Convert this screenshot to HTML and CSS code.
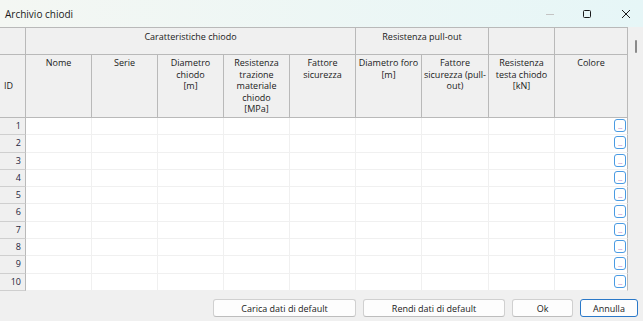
FILE: index.html
```html
<!DOCTYPE html>
<html lang="it">
<head>
<meta charset="utf-8">
<title>Archivio chiodi</title>
<link rel="stylesheet" href="styles.css">
</head>
<body>
<div class="window">
  <div class="titlebar">
    <span class="title">Archivio chiodi</span>
    <div class="controls">
      <span class="ctl min"><svg width="10" height="10" viewBox="0 0 10 10"><path d="M1 5.5h8" stroke="#c4c4c4" stroke-width="1"/></svg></span>
      <span class="ctl max"><svg width="10" height="10" viewBox="0 0 10 10"><rect x="1.5" y="1.5" width="7" height="7" rx="1" fill="none" stroke="#1a1a1a" stroke-width="1"/></svg></span>
      <span class="ctl close"><svg width="10" height="10" viewBox="0 0 10 10"><path d="M1 1L9 9M9 1L1 9" stroke="#1a1a1a" stroke-width="1"/></svg></span>
    </div>
  </div>
  <div class="main">
    <div class="grid">
      <div class="head">
        <div class="hc r1"></div>
        <div class="hc r1 span5">Caratteristiche chiodo</div>
        <div class="hc r1 span2">Resistenza pull-out</div>
        <div class="hc r1"></div>
        <div class="hc r1 last"></div>
        <div class="hc r2 id">ID</div>
        <div class="hc r2">Nome</div>
        <div class="hc r2">Serie</div>
        <div class="hc r2">Diametro<br>chiodo<br>[m]</div>
        <div class="hc r2">Resistenza<br>trazione<br>materiale<br>chiodo<br>[MPa]</div>
        <div class="hc r2">Fattore<br>sicurezza</div>
        <div class="hc r2">Diametro foro<br>[m]</div>
        <div class="hc r2">Fattore<br>sicurezza (pull-<br>out)</div>
        <div class="hc r2">Resistenza<br>testa chiodo<br>[kN]</div>
        <div class="hc r2 last">Colore</div>
      </div>
      <div class="body" id="body"></div>
    </div>
    <div class="scrollbar"><span class="thumb"></span></div>
  </div>
  <div class="footer">
    <button class="btn w1">Carica dati di default</button>
    <button class="btn w2">Rendi dati di default</button>
    <button class="btn w3">Ok</button>
    <button class="btn w4 default">Annulla</button>
  </div>
</div>
<script>
  var b = document.getElementById('body');
  var html = '';
  for (var i = 1; i <= 10; i++) {
    html += '<div class="rn">' + i + '</div>';
    for (var c = 0; c < 8; c++) html += '<div class="dc"></div>';
    html += '<div class="dc last"><span class="dots">...</span></div>';
  }
  b.innerHTML = html;
</script>
</body>
</html>
```

FILE: styles.css
```css
* { box-sizing: border-box; }
html, body { margin: 0; padding: 0; }
body {
  width: 643px;
  height: 321px;
  overflow: hidden;
  font-family: "Open Sans", "Noto Sans", sans-serif;
  font-size: 9px;
  color: #1a1a1a;
  background: #f0f0f0;
}
.window { width: 643px; height: 321px; display: flex; flex-direction: column; }
.titlebar {
  height: 27px;
  flex: none;
  display: flex;
  align-items: center;
  justify-content: space-between;
  background: linear-gradient(to right, #f4f7f3, #e6f6f7);
}
.title { padding-left: 5px; font-size: 10px; color: #1a1a1a; }
.controls { display: flex; align-items: center; }
.ctl { height: 27px; display: flex; align-items: center; justify-content: center; }
.ctl svg { display: block; }
.min { width: 30px; }
.max { width: 44px; }
.close { width: 34px; }

.main { display: flex; height: 264px; flex: none; }
.grid { width: 628px; display: flex; flex-direction: column; background: #fff; }
.head {
  display: grid;
  grid-template-columns: 26px 66px 66px 66px 66px 66px 66px 67px 66px 73px;
  grid-template-rows: 28px 63px;
  background: #f0f0f0;
}
.hc {
  border-right: 1px solid #b9b9b9;
  border-bottom: 1px solid #b9b9b9;
  text-align: center;
  line-height: 11.5px;
  color: #1a1a1a;
}
.hc.r1 { border-top: 1px solid #b9b9b9; padding-top: 3px; }
.span5 { grid-column: span 5; }
.span2 { grid-column: span 2; }
.hc.r2 { padding-top: 2px; }
.hc.id { text-align: left; padding-left: 4px; display: flex; align-items: center; padding-top: 0; }

.body {
  display: grid;
  grid-template-columns: 26px 66px 66px 66px 66px 66px 66px 67px 66px 73px;
  grid-auto-rows: 17.3px;
}
.rn {
  background: #f0f0f0;
  border-right: 1px solid #b9b9b9;
  border-bottom: 1px solid #cfcfcf;
  text-align: right;
  padding-right: 4px;
  line-height: 16px;
  color: #1f1f3d;
}
.dc {
  border-right: 1px solid #f0f0f0;
  border-bottom: 1px solid #f0f0f0;
  background: #fff;
}
.dc.last { border-right: 1px solid #b9b9b9; position: relative; }
.dots {
  position: absolute;
  right: 1px;
  top: 1px;
  width: 12px;
  height: 13px;
  border: 1px solid #4a9be3;
  border-radius: 3px;
  background: #fff;
  color: #b070c0;
  font-size: 7px;
  line-height: 13px;
  text-align: center;
  letter-spacing: -0.5px;
  overflow: hidden;
}
.scrollbar { width: 15px; background: #f0f0f0; position: relative; }
.thumb { position: absolute; left: 7px; top: 13px; width: 2px; height: 13px; background: #8a8a8a; border-radius: 1px; }

.footer {
  flex: 1;
  display: flex;
  justify-content: flex-end;
  align-items: flex-start;
  gap: 7px;
  padding: 8px 5px 0 0;
  background: #f0f0f0;
}
.btn {
  height: 18px;
  font-family: inherit;
  font-size: 9px;
  color: #1a1a1a;
  background: #fdfdfd;
  border: 1px solid #d0d0d0;
  border-bottom-color: #bdbdbd;
  border-radius: 3px;
  padding: 0;
}
.w1 { width: 143px; }
.w2 { width: 142px; }
.w3 { width: 61px; }
.w4 { width: 58px; }
.btn.default { border: 1px solid #2a78c8; }
```
